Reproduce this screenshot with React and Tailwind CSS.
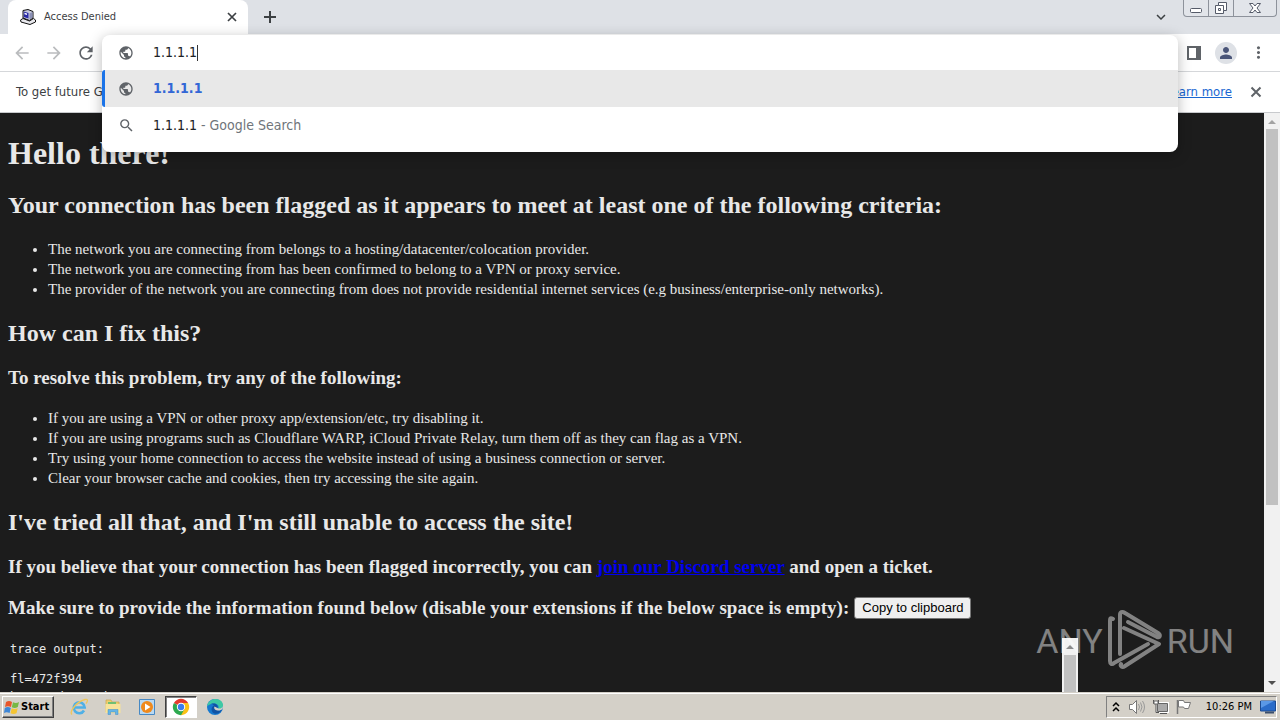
import { MdPublic, MdSearch, MdArrowBack, MdArrowForward, MdRefresh, MdPerson, MdMoreVert, MdExpandMore } from "react-icons/md";

const networkCriteria = [
  "The network you are connecting from belongs to a hosting/datacenter/colocation provider.",
  "The network you are connecting from has been confirmed to belong to a VPN or proxy service.",
  "The provider of the network you are connecting from does not provide residential internet services (e.g business/enterprise-only networks).",
];

const fixes = [
  "If you are using a VPN or other proxy app/extension/etc, try disabling it.",
  "If you are using programs such as Cloudflare WARP, iCloud Private Relay, turn them off as they can flag as a VPN.",
  "Try using your home connection to access the website instead of using a business connection or server.",
  "Clear your browser cache and cookies, then try accessing the site again.",
];

function Favicon() {
  return (
    <svg viewBox="0 0 16 16" className="h-4 w-4" aria-hidden="true">
      <path d="M3 1.5 8 .5l5 2v6.500l-3.500 2.500L3 9z" fill="#c4c8dc" stroke="#111" strokeWidth="1" />
      <path d="M3.800 2.500 8.500 4v5.500L3.800 8z" fill="#2b2ca8" />
      <path d="M4.500 3.800 7 4.600v1.400L4.500 5.200z" fill="#fff" />
      <path d="M9.500 4.500 12.500 3v5.500L9.500 10.500z" fill="#8b90b5" />
      <path d="M.500 11 3 9.500l6.500 2.500 4-2.500 2 1.500v2l-5.500 2.500L1 13z" fill="#e9e9ee" stroke="#111" strokeWidth="1" />
    </svg>
  );
}

function TabStrip() {
  return (
    <header className="flex h-[34px] shrink-0 bg-[#dee1e6] pl-2">
      <div className="flex w-60 items-center rounded-t-lg bg-white pl-3 pr-2">
        <Favicon />
        <span className="ml-2 flex-1 text-[11px] text-[#3c4043]">Access Denied</span>
        <button aria-label="Close tab" className="flex h-4 w-4 items-center justify-center text-[#3c4043]">
          <svg viewBox="0 0 10 10" className="h-2.5 w-2.5"><path d="M1 1l8 8M9 1L1 9" stroke="currentColor" strokeWidth="1.700" /></svg>
        </button>
      </div>
      <button aria-label="New tab" className="ml-3 flex w-5 items-center justify-center text-[#3c4043]">
        <svg viewBox="0 0 12 12" className="h-3 w-3"><path d="M6 0v12M0 6h12" stroke="currentColor" strokeWidth="2" /></svg>
      </button>
      <button aria-label="Search tabs" className="ml-auto mr-3 flex w-5 items-center justify-center text-[#3c4043]">
        <MdExpandMore size={18} />
      </button>
      <div className="mr-[3px] flex h-[17px] w-[94px] rounded-b border border-t-0 border-[#8d929b] bg-[#e2e5ea]">
        <button aria-label="Minimize" className="flex w-[25px] items-center justify-center border-r border-[#8d929b]">
          <svg viewBox="0 0 14 16" className="h-4 w-3.5"><rect x="1.500" y="8.500" width="11" height="4" rx="1" fill="#fff" stroke="#555b69" /></svg>
        </button>
        <button aria-label="Restore" className="flex w-[25px] items-center justify-center border-r border-[#8d929b]">
          <svg viewBox="0 0 14 16" className="h-4 w-3.5">
            <path d="M4.500 2.500h8v8h-3v3h-8v-8h3z" fill="#fff" stroke="#555b69" />
            <path d="M4.500 5.500h5v5M4.500 8.500h2v2h-2z" fill="none" stroke="#555b69" />
          </svg>
        </button>
        <button aria-label="Close" className="flex flex-1 items-center justify-center">
          <svg viewBox="0 0 14 16" className="h-4 w-3.5">
            <path d="M1.500 3.500h3.500l2 2.500 2-2.500h3.500L9 8l3.500 4.500H9l-2-2.500-2 2.500H1.500L5 8z" fill="#fff" stroke="#555b69" />
          </svg>
        </button>
      </div>
    </header>
  );
}

function Omnibox() {
  return (
    <div className="absolute inset-x-0 top-px z-10 overflow-hidden rounded-lg bg-white pb-2 text-[14px] shadow-[0_3px_14px_rgba(0,0,0,0.28)]">
      <label className="flex h-[35px] items-center pl-4">
        <MdPublic size={16} className="text-[#5f6368]" aria-hidden="true" />
        <input aria-label="Address and search bar" size={5} defaultValue="1.1.1.1" className="ml-[19px] h-4 w-[45px] border-r border-[#333] bg-transparent text-[#202124] outline-none" />
      </label>
      <ul>
        <li>
          <a href="#visit" className="flex h-[37px] items-center rounded-l-[3px] border-l-[3px] border-[#1a73e8] bg-[#e8e8e8] pl-[13px]">
            <MdPublic size={16} className="text-[#5f6368]" aria-hidden="true" />
            <span className="ml-[19px] font-bold text-[#3367d6]">1.1.1.1</span>
          </a>
        </li>
        <li>
          <a href="#search" className="flex h-[37px] items-center pl-4">
            <MdSearch size={17} className="text-[#5f6368]" aria-hidden="true" />
            <span className="ml-[18px] text-[#202124]">1.1.1.1</span>
            <span className="whitespace-pre text-[#70757a]"> - Google Search</span>
          </a>
        </li>
      </ul>
    </div>
  );
}

function Toolbar() {
  return (
    <nav aria-label="Browser toolbar" className="flex h-[38px] shrink-0 border-b border-[#d5d7da] bg-white px-1.5 text-[#5f6368]">
      <button aria-label="Back" className="flex w-8 items-center justify-center text-[#babcbe]"><MdArrowBack size={20} /></button>
      <button aria-label="Forward" className="flex w-8 items-center justify-center text-[#babcbe]"><MdArrowForward size={20} /></button>
      <button aria-label="Reload" className="flex w-8 items-center justify-center"><MdRefresh size={20} /></button>
      <div className="relative flex-1"><Omnibox /></div>
      <button aria-label="Side panel" className="flex w-8 items-center justify-center">
        <svg viewBox="0 0 14 14" className="h-3.5 w-3.5"><path d="M0 0h14v14H0zM2 2v10h7V2z" fill="currentColor" fillRule="evenodd" /></svg>
      </button>
      <button aria-label="Profile" className="flex w-8 items-center justify-center">
        <span className="flex h-[22px] w-[22px] items-center justify-center rounded-full bg-[#dee1e6] text-[#4a5578]"><MdPerson size={18} /></span>
      </button>
      <button aria-label="Menu" className="flex w-8 items-center justify-center"><MdMoreVert size={19} /></button>
    </nav>
  );
}

function InfoBar() {
  return (
    <div className="flex h-[41px] shrink-0 items-center border-b border-[#c8cacd] bg-white pl-4 pr-[18px] text-[13px] text-[#3c4043]">
      <p>To get future Google</p>
      <a href="#learn" className="ml-auto text-[#1967d2] underline">Learn more</a>
      <button aria-label="Dismiss" className="ml-[18px] text-[#5f6368]">
        <svg viewBox="0 0 12 12" className="h-3 w-3"><path d="M1.500 1.500l9 9M10.500 1.500l-9 9" stroke="currentColor" strokeWidth="2" /></svg>
      </button>
    </div>
  );
}

function Watermark() {
  return (
    <div className="absolute bottom-[19px] right-[46px] flex items-center font-['Roboto',sans-serif] text-[34px] leading-none text-white opacity-45">
      <span>ANY</span>
      <svg viewBox="0 0 56 64" className="ml-1 h-16 w-14" fill="none" stroke="currentColor" strokeWidth="4" strokeLinejoin="round" strokeLinecap="round" aria-hidden="true">
        <path d="M6 10C3 8 3 10 3 12V52c0 3 2 4 4 2L41 35" />
        <path d="M13 45V6c0-3 2-4 5-2L51 24c3 2 2 5-1 4L21 13" />
        <path d="M17 19L52 35 18 57c-3 2-5 0-4-2" />
      </svg>
      <span className="ml-1">RUN</span>
    </div>
  );
}

function Page() {
  const h2 = "text-[24px] font-bold leading-7";
  const h3 = "text-[19px] font-bold leading-[21px]";
  const list = "list-disc pl-10 text-[15px] leading-5";
  return (
    <div className="relative flex min-h-0 flex-1 bg-[#1c1c1c]">
      <main className="flex min-w-0 flex-1 flex-col gap-5 overflow-hidden px-2 pt-[22px] font-['Liberation_Serif',serif] text-[#e8e8e8]">
        <h1 className="text-[32px] font-bold leading-9">Hello there!</h1>
        <h2 className={h2}>Your connection has been flagged as it appears to meet at least one of the following criteria:</h2>
        <ul className={list}>{networkCriteria.map((t) => <li key={t}>{t}</li>)}</ul>
        <h2 className={h2}>How can I fix this?</h2>
        <h3 className={h3}>To resolve this problem, try any of the following:</h3>
        <ul className={list}>{fixes.map((t) => <li key={t}>{t}</li>)}</ul>
        <h2 className={h2}>I've tried all that, and I'm still unable to access the site!</h2>
        <h3 className={h3}>
          If you believe that your connection has been flagged incorrectly, you can <a href="#discord" className="text-[#0000ee] underline">join our Discord server</a> and open a ticket.
        </h3>
        <div className="flex items-center gap-[5px]">
          <h3 className={h3}>Make sure to provide the information found below (disable your extensions if the below space is empty):</h3>
          <button className="-my-1 h-[22px] rounded-[3px] border border-[#767676] bg-[#efefef] px-[7px] font-['Liberation_Sans',sans-serif] text-[13px] leading-none text-black">Copy to clipboard</button>
        </div>
        <div className="flex min-h-0 w-6/7 flex-1 overflow-hidden">
          <div className="flex flex-1 flex-col gap-[3px] pl-0.5 pt-1 font-['DejaVu_Sans_Mono',monospace] text-[12px] leading-[15px]">
            <pre className="font-['DejaVu_Sans_Mono',monospace]">{"trace output:\n\nfl=472f394"}</pre>
            <pre className="font-['DejaVu_Sans_Mono',monospace]">h=proxyhouse.be</pre>
          </div>
          <div aria-hidden="true" className="flex w-4 flex-col items-center bg-[#f1f1f1]">
            <svg viewBox="0 0 16 17" className="h-[17px] w-4"><path d="M4 11l4-4 4 4z" fill="#8b8b8b" /></svg>
            <div className="w-3 flex-1 bg-[#c1c1c1]" />
          </div>
        </div>
      </main>
      <Watermark />
      <div aria-hidden="true" className="flex w-4 flex-col items-center bg-[#f1f1f1]">
        <svg viewBox="0 0 16 16" className="h-4 w-4"><path d="M4 11l4-4 4 4z" fill="#a3a3a3" /></svg>
        <div className="w-3 grow-[376] bg-[#c1c1c1]" />
        <div className="grow-[170]" />
        <svg viewBox="0 0 16 17" className="h-[17px] w-4"><path d="M4 6l4 4 4-4z" fill="#505050" /></svg>
      </div>
    </div>
  );
}

function IeIcon() {
  return (
    <svg viewBox="0 0 18 18" className="h-[18px] w-[18px]" aria-hidden="true">
      <path d="M14 12.500A5.500 5.500 0 1 1 14.700 9.500H5" fill="none" stroke="#4fb0e6" strokeWidth="2.600" />
      <path d="M2 16.500C-1 14 6 4 15 1.500c4-1 2 3 1 4" fill="none" stroke="#efc65a" strokeWidth="1.300" />
    </svg>
  );
}

function FolderIcon() {
  return (
    <svg viewBox="0 0 18 18" className="h-[18px] w-[18px]" aria-hidden="true">
      <path d="M2 2h5l1 2h7v10H2z" fill="#edcf70" stroke="#cba849" strokeWidth=".7" />
      <path d="M4 4h8v4H4z" fill="#6fbf73" />
      <path d="M1.500 6h15v9h-15z" fill="#f7e39a" />
      <path d="M4 16.500v-5h10v5h-2.500V14h-5v2.500z" fill="#65b5e6" stroke="#3e8dc4" strokeWidth=".5" />
    </svg>
  );
}

function PlayerIcon() {
  return (
    <svg viewBox="0 0 18 18" className="h-[18px] w-[18px]" aria-hidden="true">
      <path d="M1.500 1.500h15v15h-15z" fill="#b9d9f2" stroke="#4789c4" />
      <circle cx="9" cy="9" r="6" fill="#f08a1c" />
      <path d="M7 5.500 12.500 9 7 12.500z" fill="#fff" />
    </svg>
  );
}

function ChromeIcon() {
  return (
    <svg viewBox="0 0 18 18" className="h-[18px] w-[18px]" aria-hidden="true">
      <path d="M9 9 1.900 4.900A8.200 8.200 0 0 1 16.100 4.900H9z" fill="#e33b2e" />
      <path d="M9 9V4.900h7.100A8.200 8.200 0 0 1 9 17.200z" fill="#fbc116" />
      <path d="M1.900 4.900 9 9l3.500 2L9 17.200A8.200 8.200 0 0 1 1.900 4.900z" fill="#2da94f" />
      <circle cx="9" cy="9" r="4.200" fill="#fff" />
      <circle cx="9" cy="9" r="3.200" fill="#3b7ded" />
    </svg>
  );
}

function EdgeIcon() {
  return (
    <svg viewBox="0 0 18 18" className="h-[18px] w-[18px]" aria-hidden="true">
      <circle cx="9" cy="9" r="8" fill="#1679cf" />
      <path d="M1 8.500C2 3 6 1 9.500 1c5 0 8 3.500 7.500 7-.3 2.500-3 3.300-5 3C14 8 11 5 7 5.500 4 6 2 7 1 8.500z" fill="#3ec9a4" />
      <path d="M5 6c4-1.500 7.500 1 6.500 4-1.500 2 1 3 4.500 2-3 5-10 5-10.500-.5C5.500 9 7 8 8 7.500 7 6 6 6 5 6z" fill="#1053a4" />
      <path d="M8.500 8.500c-1 1.500 0 3.500 3 4 2 .3 4-.5 5-1.500l.5-3c-1 2.500-4 3.200-5.500 2z" fill="#d4d0c8" />
    </svg>
  );
}

function Taskbar() {
  const item = "flex h-[22px] w-8 items-center justify-center";
  return (
    <footer className="flex h-7 shrink-0 items-center border-t border-[#d4d0c8] bg-[#d4d0c8] pl-0.5 pr-[3px] pt-px shadow-[inset_0_1px_0_#ffffff]">
      <button className="mr-[9px] flex h-[22px] w-[52px] items-center gap-px border border-[#404040] border-l-white border-t-white pl-px text-[11px] font-bold text-black shadow-[inset_-1px_-1px_0_#808080]">
        <svg viewBox="0 0 16 16" className="h-4 w-4 shrink-0" aria-hidden="true">
          <path d="M2 3c2-1.500 4-1.500 6 0L7 8C5 7 3 7 1 8z" fill="#e8562a" />
          <path d="M9 3.300c2 1 4 1 6-.3l-1.200 5c-2 1.200-4 1.200-6 .3z" fill="#77b843" />
          <path d="M.8 9c2-1.200 4-1.200 6 0l-1.200 5c-2-1-4-1-5.600 0z" fill="#3f87d6" />
          <path d="M7.700 9.300c2 1 4 1 6 0l-1.200 5c-2 1-4 1-6 0z" fill="#f5c532" />
        </svg>
        <span>Start</span>
      </button>
      <div className="flex gap-0.5">
        <button aria-label="Internet Explorer" className={item}><IeIcon /></button>
        <button aria-label="File Explorer" className={item}><FolderIcon /></button>
        <button aria-label="Media Player" className={item}><PlayerIcon /></button>
        <button aria-label="Chrome" className="flex h-[22px] w-8 items-center justify-center border border-white border-l-[#404040] border-t-[#404040] bg-white shadow-[inset_1px_1px_0_#808080]"><ChromeIcon /></button>
        <button aria-label="Edge" className={item}><EdgeIcon /></button>
      </div>
      <div className="ml-auto flex h-[22px] items-center border border-white border-l-[#808080] border-t-[#808080] pl-1 text-[11px] text-black">
        <svg viewBox="0 0 10 12" className="h-3 w-2.5" fill="none" stroke="#000" strokeWidth="1.500" aria-hidden="true"><path d="M2 5l3-3 3 3M2 10l3-3 3 3" /></svg>
        <svg viewBox="0 0 18 16" className="ml-[7px] h-4 w-[18px]" fill="none" stroke="#777" aria-hidden="true">
          <path d="M1.500 5.500h3l4-4v13l-4-4h-3z" fill="#fff" />
          <path d="M10.500 5q2 3 0 6M12.500 3.500q3 4.500 0 9M14.500 2q4 6 0 12" stroke="#999" />
        </svg>
        <svg viewBox="0 0 18 16" className="ml-1.5 h-4 w-[18px]" fill="none" stroke="#666" aria-hidden="true">
          <path d="M5.500 4.500h10v8h-10z" fill="#bbb" stroke="#fff" strokeWidth="3" />
          <path d="M5.500 4.500h10v8h-10z" fill="#aaa" />
          <path d="M8 14.500h7M1.500 1v3.500h5V1M4 4.500v9h3" stroke="#555" />
          <path d="M2 2h4v3H2z" fill="#fff" />
        </svg>
        <svg viewBox="0 0 18 16" className="ml-1.5 h-4 w-[18px]" fill="#fff" stroke="#777" aria-hidden="true">
          <path d="M1.500 1v14" strokeWidth="1.500" />
          <path d="M2.500 1.500h5l1 2h6l-2 6h-4l-1-1.500h-5z" />
        </svg>
        <span className="ml-3">10:26 PM</span>
        <svg viewBox="0 0 16 14" className="ml-2 h-3.5 w-4" aria-hidden="true">
          <path d="M.5 1h15v10H.5z" fill="#2b6cc9" stroke="#1d4b91" />
          <path d="M1 1h13L1 8z" fill="#5b98e6" />
          <path d="M5 12.500h9" stroke="#3b4f6d" strokeWidth="2" />
        </svg>
      </div>
    </footer>
  );
}

export default function App() {
  return (
    <div className="flex h-screen flex-col overflow-hidden font-['DejaVu_Sans_Condensed','DejaVu_Sans',sans-serif]">
      <TabStrip />
      <Toolbar />
      <InfoBar />
      <Page />
      <Taskbar />
    </div>
  );
}
